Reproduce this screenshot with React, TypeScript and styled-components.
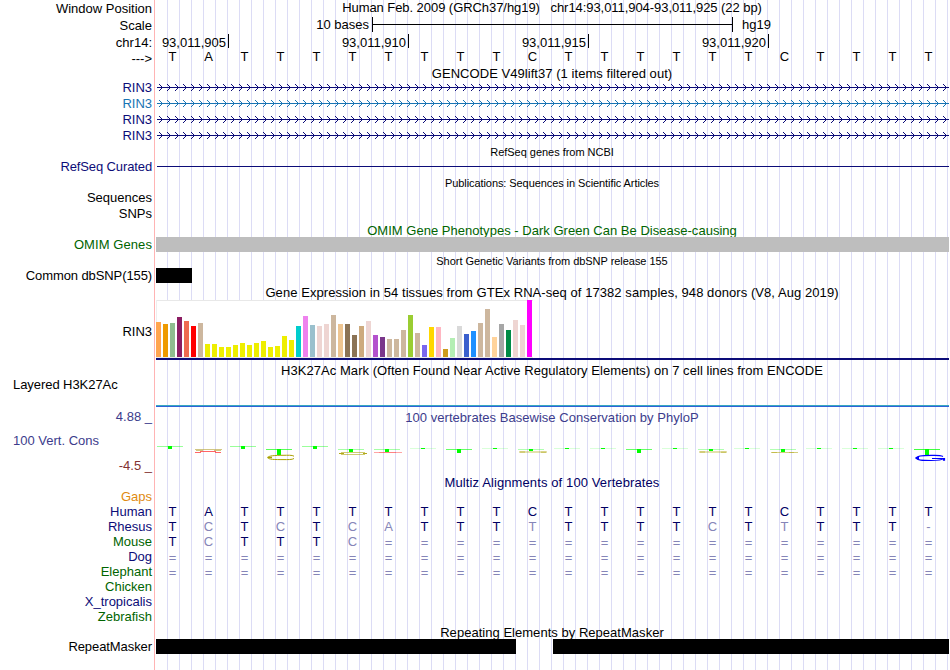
import React from "react";
import styled, { createGlobalStyle } from "styled-components";

const GlobalStyle = createGlobalStyle`
  body { margin: 0; background: #fff; }
`;

const Browser = styled.main`
  width: 950px;
  height: 670px;
  overflow: hidden;
  font: 13px "Liberation Sans", Arial, sans-serif;
  color: #000;
  background:
    linear-gradient(#ffb4b4, #ffb4b4) 154px 0 / 1px 100% no-repeat,
    repeating-linear-gradient(90deg, #dcdcf5 0 1px, transparent 1px 12px) 167px 0 / 783px 100% no-repeat,
    #fff;
`;

const Row = styled.div<{ $h: number }>`
  display: grid;
  grid-template-columns: 155px 795px;
  height: ${(p) => p.$h}px;
`;

const Label = styled.div<{ $color?: string; $top?: number; $left?: boolean; $lh?: number; $ls?: number }>`
  box-sizing: border-box;
  padding: ${(p) => p.$top ?? 0}px 3px 0 13px;
  text-align: ${(p) => (p.$left ? "left" : "right")};
  line-height: ${(p) => p.$lh ?? 16}px;
  letter-spacing: ${(p) => p.$ls ?? 0}px;
  color: ${(p) => p.$color ?? "#000"};
  white-space: pre;
`;

const Title = styled.div<{ $color?: string; $small?: boolean; $lh: number; $ls?: number }>`
  width: 794px;
  text-align: center;
  font-size: ${(p) => (p.$small ? 11 : 13)}px;
  line-height: ${(p) => p.$lh}px;
  letter-spacing: ${(p) => p.$ls ?? 0}px;
  color: ${(p) => p.$color ?? "#000"};
  white-space: pre;
`;

const ScaleTrack = styled.div`
  display: grid;
  grid-template-columns: 214px 361px 1fr;
  column-gap: 3px;
  line-height: 16px;
  & > :first-child { text-align: right; }
  & > :last-child { padding-left: 6px; }
`;

const ScaleBar = styled.div`
  height: 15px;
  box-sizing: border-box;
  border: solid #000;
  border-width: 0 1px;
  background: linear-gradient(#000, #000) 0 7px / 100% 1px no-repeat;
`;

const Ruler = styled.div`
  display: grid;
  grid-template-columns: 74px repeat(3, 180px);
`;

const Tick = styled.div`
  height: 14px;
  border-right: 1px solid #000;
  padding-right: 2px;
  text-align: right;
  line-height: 17px;
`;

const Bases = styled.div<{ $lh: number; $color: string }>`
  display: grid;
  grid-template-columns: repeat(22, 36px);
  margin-left: -0.5px;
  text-align: center;
  line-height: ${(p) => p.$lh}px;
  color: ${(p) => p.$color};
`;

const Base = styled.span<{ $faint: boolean; $low: boolean }>`
  padding-top: ${(p) => (p.$low ? 1 : 0)}px;
  color: ${(p) => (p.$faint ? "#8585b8" : "inherit")};
`;

const Bar = styled.div<{ $w: number; $color: string; $gap?: number }>`
  height: 15px;
  width: ${(p) => p.$w}px;
  margin-left: ${(p) => p.$gap ?? 0}px;
  background: ${(p) => p.$color};
`;

const Bars = styled.div`
  display: flex;
  padding-left: 1px;
`;

const Drawing = styled.svg`
  display: block;
  overflow: visible;
`;

const GeneLine = styled.div`
  height: 1px;
  width: 792px;
  margin: 7px 0 0 2px;
  background: #0c0c78;
`;

const Signal = styled.div`
  height: 2px;
  width: 793px;
  margin: 25px 0 0 1px;
  background: linear-gradient(#38a8c0 50%, #2f62d8 50%);
`;

const Stack = styled.div`
  display: flex;
  flex-direction: column;
`;

const NAVY = "#0c0c78";
const GREEN = "#006400";
const INDIGO = "#3c3c8c";

function Gene({ color }: { color: string }) {
  const arrows = Array.from({ length: 99 }, (_, i) => {
    const x = 4 + i * 8;
    return `M${x} 4l3.5 3.5l-3.5 3.5`;
  }).join("");
  return (
    <Row $h={16}>
      <Label $color={color}>RIN3</Label>
      <Drawing width="795" height="16">
        <path d="M2 7.5H794" stroke={color} strokeWidth="1.1" />
        <path d={arrows} stroke={color} strokeWidth="1" fill="none" />
      </Drawing>
    </Row>
  );
}

function Sequence({ text }: { text: string }) {
  return (
    <>
      {text.split("").map((c, i) => (
        <Base key={i} $low={c === "="} $faint={c === "=" || c === "-" || c !== c.toUpperCase()}>
          {c.toUpperCase()}
        </Base>
      ))}
    </>
  );
}

const HUMAN = "TATTTTTTTTCTTTTTTCTTTT";

const expression: [number, string][] = [
  [35, "#ffa54f"], [33, "#ee9a00"], [34, "#8fbc8f"], [40, "#8b1c62"], [36, "#ee6a50"], [31, "#ff0000"],
  [34, "#cdb79e"], [13, "#eeee00"], [13, "#eeee00"], [10, "#eeee00"], [10, "#eeee00"], [12, "#eeee00"],
  [14, "#eeee00"], [12, "#eeee00"], [14, "#eeee00"], [16, "#eeee00"], [10, "#eeee00"], [11, "#eeee00"],
  [21, "#eeee00"], [17, "#eeee00"], [31, "#00cdcd"], [41, "#ee82ee"], [32, "#9ac0cd"], [31, "#eed5d2"],
  [33, "#eed5d2"], [42, "#cdb79e"], [33, "#eec591"], [33, "#8b7355"], [22, "#8b7355"], [31, "#cdaa7d"],
  [36, "#eed5d2"], [22, "#b452cd"], [20, "#7a378b"], [18, "#cdb79e"], [18, "#cdb79e"], [27, "#cdb79e"],
  [42, "#9acd32"], [24, "#cdb79e"], [12, "#7a67ee"], [30, "#ffd700"], [30, "#ffb6c1"], [8, "#cd9b1d"],
  [19, "#b4eeb4"], [31, "#d9d9d9"], [23, "#3a5fcd"], [26, "#1e90ff"], [34, "#cdb79e"], [48, "#cdb79e"],
  [20, "#ffd39b"], [33, "#a6a6a6"], [27, "#008b45"], [37, "#eed5d2"], [32, "#eed5d2"], [57, "#ff00ff"],
];

function Expression() {
  return (
    <Drawing width="795" height="60" shapeRendering="crispEdges">
      <rect x="1" y="0" width="378" height="58" fill="#fff" />
      <path d="M1 .5H378M1 57.5H378" stroke="#e8e8e8" />
      <path d="M1.5 0V57" stroke="#eeeeee" />
      {expression.map(([h, c], i) => (
        <rect key={i} x={1 + i * 7} y={57 - h} width="5" height={h} fill={c} />
      ))}
      <rect x="1" y="58" width="793" height="2" fill={NAVY} />
    </Drawing>
  );
}

// Per-base logo: [y of crossbar, crossbar opacity, stem height], y measured from the top of the panel.
const stems: ([number, number, number] | null)[] = [
  [20, 0.4, 3], null, [20, 0.4, 3], [23, 0.65, 6], [20, 0.4, 3], [23, 0.35, 3], [23, 0.35, 3], [22, 0.15, 1],
  [23, 0.6, 4], [22, 0.15, 1], [23, 0.3, 2], [22, 0.15, 1], [22, 0.15, 1], [23, 0.6, 4], [22, 0.15, 1],
  [23, 0.3, 2], [22, 0.15, 1], [23, 0.3, 3], [22, 0.15, 1], [22, 0.15, 1], [22, 0.15, 1], [23, 0.75, 6],
];

function Conservation() {
  return (
    <Drawing width="795" height="49">
      {stems.map((s, i) => {
        if (!s) return null;
        const x = i * 36 + (i ? 1 : 0);
        return (
          <g key={i} fill="#00ff00">
            <rect x={2 + x} y={s[0]} width="26" height="1" opacity={s[1]} />
            <rect x={13 + x} y={s[0]} width="4" height={s[2]} />
          </g>
        );
      })}
      <path d="M40 23.5H67M41 24.5H48M59 24.5H66" stroke="#b8a840" opacity=".65" fill="none" />
      <path d="M40 26.5H46M45 25.5H61M60 26.5H66" stroke="#ff4040" opacity=".8" fill="none" />
      <g stroke="#aaa000" fill="none">
        <path d="M139 30.2C137 28.9 133 29.3 128 29.3C120 29.3 113 29.8 113 31.5C113 33.6 120 33.6 128 33.6C133 33.6 137 33.8 139 32.5" />
        <path d="M112.5 31.5H117" strokeWidth="1.5" />
        <path d="M186 26.5H210M186 28.500H210" opacity=".55" />
        <path d="M184 27.500H189M208 27.500H212" opacity=".9" />
        <path d="M364 26H392" strokeWidth="1.6" opacity=".4" />
        <path d="M365 26H370M386 26.200H391" opacity=".6" />
        <path d="M544 26H572" strokeWidth="1.6" opacity=".4" />
        <path d="M545 26H550M566 26.200H571" opacity=".6" />
        <path d="M616 26.500H643" opacity=".5" />
        <path d="M617 26.500H622M634 26.500H639" opacity=".4" />
      </g>
      <path d="M219 26.500H247" stroke="#ff2020" opacity=".4" />
      <path d="M224 26.500H241" stroke="#ff2020" opacity=".25" />
      <g stroke="#0000ff" fill="none">
        <path d="M788 30.500C785 29 781 29.400 776 29.400C767 29.400 761.500 30 761.500 32C761.500 34.500 768 34.500 776 34.500C782 34.500 787 34.200 788.500 32.500H777" strokeWidth="1.1" />
        <path d="M760.500 32H764M789 32V34.800" strokeWidth="2.200" />
      </g>
    </Drawing>
  );
}

const species: [string, string, string][] = [
  ["Human", NAVY, HUMAN],
  ["Rhesus", NAVY, "TcTcTcaTTTtTTTTcTtTTT-"],
  ["Mouse", GREEN, "TcTTTc================"],
  ["Dog", NAVY, "======================"],
  ["Elephant", GREEN, "======================"],
  ["Chicken", GREEN, ""],
  ["X_tropicalis", NAVY, ""],
  ["Zebrafish", GREEN, ""],
];

export default function App() {
  return (
    <>
      <GlobalStyle />
      <Browser>
        <Row $h={17}>
          <Label $lh={17}>Window Position</Label>
          <Title $lh={15} $ls={-0.06}>{"Human Feb. 2009 (GRCh37/hg19)   chr14:93,011,904-93,011,925 (22 bp)"}</Title>
        </Row>
        <Row $h={17}>
          <Label $lh={17}>Scale</Label>
          <ScaleTrack><span>10 bases</span><ScaleBar /><span>hg19</span></ScaleTrack>
        </Row>
        <Row $h={16}>
          <Label $lh={18}>chr14:</Label>
          <Ruler>
            {["93,011,905", "93,011,910", "93,011,915", "93,011,920"].map((t) => <Tick key={t}>{t}</Tick>)}
          </Ruler>
        </Row>
        <Row $h={16}>
          <Label $lh={17}>{"--->"}</Label>
          <Bases $lh={13} $color="#000"><Sequence text={HUMAN} /></Bases>
        </Row>
        <Row $h={14}><span /><Title $lh={15} $ls={0.05}>GENCODE V49lift37 (1 items filtered out)</Title></Row>
        <Gene color={NAVY} />
        <Gene color="#1874b4" />
        <Gene color={NAVY} />
        <Gene color={NAVY} />
        <Row $h={15}><span /><Title $small $lh={17} $ls={-0.03}>RefSeq genes from NCBI</Title></Row>
        <Row $h={16}><Label $color={NAVY} $ls={-0.12}>RefSeq Curated</Label><GeneLine /></Row>
        <Row $h={15}><span /><Title $small $lh={17} $ls={-0.08}>Publications: Sequences in Scientific Articles</Title></Row>
        <Row $h={16}><Label>Sequences</Label></Row>
        <Row $h={16}><Label>SNPs</Label></Row>
        <Row $h={15}><span /><Title $lh={17} $ls={0.02} $color={GREEN}>OMIM Gene Phenotypes - Dark Green Can Be Disease-causing</Title></Row>
        <Row $h={15}>
          <Label $color={GREEN} $ls={0.08}>OMIM Genes</Label>
          <Bars><Bar $w={793} $color="#bebebe" /></Bars>
        </Row>
        <Row $h={16}><span /><Title $small $lh={18} $ls={-0.04}>Short Genetic Variants from dbSNP release 155</Title></Row>
        <Row $h={15}>
          <Label $ls={-0.1}>Common dbSNP(155)</Label>
          <Bars><Bar $w={36} $color="#000" /></Bars>
        </Row>
        <Row $h={17}><span /><Title $lh={19} $ls={0.065}>Gene Expression in 54 tissues from GTEx RNA-seq of 17382 samples, 948 donors (V8, Aug 2019)</Title></Row>
        <Row $h={60}><Label $lh={64}>RIN3</Label><Expression /></Row>
        <Row $h={20}><span /><Title $lh={21} $ls={0.05}>H3K27Ac Mark (Often Found Near Active Regulatory Elements) on 7 cell lines from ENCODE</Title></Row>
        <Row $h={29}>
          <Label $left $lh={9} $ls={-0.06}>Layered H3K27Ac</Label>
          <Signal />
        </Row>
        <Row $h={66}>
          <Stack>
            <Label $color={INDIGO} $lh={15}>4.88 _</Label>
            <Label $color={INDIGO} $left $lh={15} $top={9}>100 Vert. Cons</Label>
            <Label $color="#823232" $lh={15} $top={10}>-4.5 _</Label>
          </Stack>
          <Stack>
            <Title $color={INDIGO} $lh={17} $ls={0.03}>100 vertebrates Basewise Conservation by PhyloP</Title>
            <Conservation />
          </Stack>
        </Row>
        <Row $h={14}><span /><Title $color="#000064" $lh={15} $ls={0.11}>Multiz Alignments of 100 Vertebrates</Title></Row>
        <Row $h={15}><Label $color="#e08a10">Gaps</Label></Row>
        {species.map(([name, color, seq]) => (
          <Row $h={15} key={name}>
            <Label $color={color}>{name}</Label>
            <Bases $lh={15} $color="#000064"><Sequence text={seq} /></Bases>
          </Row>
        ))}
        <Row $h={15}><span /><Title $lh={17} $ls={0.03}>Repeating Elements by RepeatMasker</Title></Row>
        <Row $h={15}>
          <Label $ls={-0.08}>RepeatMasker</Label>
          <Bars><Bar $w={360} $color="#000" /><Bar $w={396} $gap={37} $color="#000" /></Bars>
        </Row>
      </Browser>
    </>
  );
}
